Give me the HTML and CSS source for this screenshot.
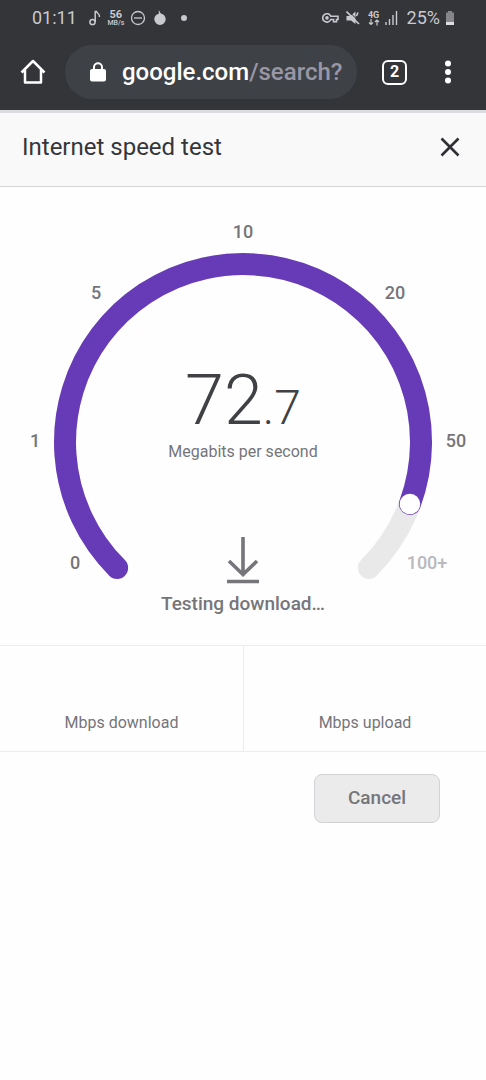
FILE: index.html
```html
<!DOCTYPE html>
<html lang="en">
<head>
<meta charset="utf-8">
<meta name="viewport" content="width=device-width, initial-scale=1">
<title>Internet speed test</title>
<link rel="stylesheet" href="styles.css">
</head>
<body>
<div class="chrome">
  <div class="status">
    <div class="status-left">
      <span class="clock">01:11</span>
      <svg class="note" width="12" height="16" viewBox="0 0 12 16"><circle cx="3.500" cy="12" r="2.600"/><path d="M6.200 12V1.500h1.300c.3 2.200 3.300 1.500 3 5.500"/></svg>
      <span class="rate"><b>56</b><small>MB/s</small></span>
      <svg class="dnd" width="16" height="16" viewBox="0 0 16 16"><circle cx="8" cy="8" r="6.500"/><path d="M4 8h8"/></svg>
      <svg class="drop" width="12" height="16" viewBox="0 0 12 16"><path d="M4.800 0l2 3.500c3 .7 4.900 2.800 4.900 5.800a5.700 5.700 0 0 1-11.400 0c0-2.800 1.700-4.800 4.500-5.500z"/></svg>
      <span class="dot"></span>
    </div>
    <div class="status-right">
      <svg class="key" width="17" height="12" viewBox="0 0 17 12"><path d="M8.800 4.300H16v3.200h-1.500V9.800h-3V7.500H8.800A4.200 4.200 0 1 1 8.800 4.300z"/><circle cx="5" cy="5.900" r="1"/></svg>
      <svg class="mute" width="14" height="14" viewBox="0 0 14 14"><path class="solid" d="M.5 5h4l5-4.500V13L5 9.500H.5z"/><path class="cut" d="M2.500 0l12 12"/><path class="slash" d="M.5 .5l12.500 12.500"/><path class="slash" d="M10.500 5l1.500-3.500"/></svg>
      <span class="net"><b>4G</b><svg width="12" height="7" viewBox="0 0 12 7"><path d="M3 0v5M1 3.500l2 2 2-2M9 6.500V1M7 3l2-2 2 2"/></svg></span>
      <svg class="signal" width="13" height="14" viewBox="0 0 13 14"><path d="M1 11v3M4.500 8v6M8 4v10M11.500 0v14"/></svg>
      <span class="percent">25%</span>
      <svg class="battery" width="10" height="14" viewBox="0 0 10 14"><path class="cell" d="M3 0h4v1.500h2V14H1V1.500h2z"/><path class="charge" d="M1 11h8v3H1z"/></svg>
    </div>
  </div>
  <div class="toolbar">
    <button class="icon-button home" aria-label="Home"><svg width="26" height="26" viewBox="0 0 26 26"><path d="M1.500 13.500L13 2l11.500 11.500M5 11v12.500h16V11"/></svg></button>
    <button class="address">
      <svg width="16" height="20" viewBox="0 0 16 20"><path d="M4 8V5.200a4 4 0 0 1 8 0V8" fill="none" stroke="#fff" stroke-width="2"/><rect x="0" y="7" width="16" height="12.500" rx="2" fill="#fff"/></svg>
      <span class="url">google.com<span class="path">/search?</span></span>
    </button>
    <button class="tabs" aria-label="Open tabs">2</button>
    <button class="icon-button more" aria-label="More"><svg width="8" height="24" viewBox="0 0 8 24"><circle cx="4" cy="3.500" r="3"/><circle cx="4" cy="12" r="3"/><circle cx="4" cy="20.500" r="3"/></svg></button>
  </div>
</div>
<header class="heading">
  <h1>Internet speed test</h1>
  <button class="icon-button close" aria-label="Close"><svg width="20" height="20" viewBox="0 0 20 20"><path d="M1.500 1.500l17 17M18.500 1.500l-17 17"/></svg></button>
</header>
<main>
  <section class="gauge">
    <svg class="dial" viewBox="0 0 486 458" role="img" aria-label="Speed gauge">
      <path class="track" d="M117.100 380.900A178 178 0 1 1 368.900 380.900"/>
      <path class="value" d="M117.100 380.900A178 178 0 1 1 409.900 317"/>
      <circle class="knob" cx="409.900" cy="317" r="10.300"/>
      <g class="ticks">
        <text x="75" y="382">0</text>
        <text x="35" y="260">1</text>
        <text x="96" y="112">5</text>
        <text x="243" y="51">10</text>
        <text x="395" y="112">20</text>
        <text x="456" y="260">50</text>
        <text class="faded" x="427" y="382">100+</text>
      </g>
    </svg>
    <div class="readout">
      <div class="speed">72<span class="fraction">.7</span></div>
      <div class="unit">Megabits per second</div>
      <svg class="arrow" width="34" height="48" viewBox="0 0 34 48"><path d="M17 1v37M3 25l14 13.500L31 25M1 45.500h32"/></svg>
      <div class="phase">Testing download…</div>
    </div>
  </section>
  <section class="results">
    <div class="result">Mbps download</div>
    <div class="result">Mbps upload</div>
  </section>
  <div class="actions"><button class="cancel">Cancel</button></div>
</main>
</body>
</html>
```
FILE: styles.css
```css
* { box-sizing: border-box; }
body { margin: 0; background: #fefefe; color: #75757a; font-family: Roboto, "Liberation Sans", sans-serif; }
button { margin: 0; padding: 0; border: 0; background: none; color: inherit; font: inherit; }
svg { display: block; flex: none; fill: none; }

.chrome { height: 110px; background: #333539; color: #fff; }
.status { display: flex; justify-content: space-between; height: 36px; padding: 0 31px 0 32px; color: #c9c9d0; }
.status-left, .status-right { display: flex; align-items: center; }
.status svg { stroke: currentColor; }
.clock, .percent { font-size: 18px; line-height: 36px; font-weight: 400; }
.note { margin-left: 12px; stroke-width: 1.5; }
.rate { display: flex; flex-direction: column; align-items: center; width: 18px; margin: 0 5px 0 6px; line-height: 10px; }
.rate b { font-size: 11px; }
.rate small { font-size: 7px; line-height: 7px; font-weight: 500; }
.dnd { stroke-width: 1.3; }
.status .drop { margin-left: 8px; fill: currentColor; stroke: none; }
.dot { width: 6px; height: 6px; margin-left: 15px; border-radius: 50%; background: currentColor; }
.key { stroke-width: 1.6; }
.mute { margin-left: 7px; }
.mute .solid { fill: currentColor; stroke: none; }
.mute .cut { stroke: #333539; stroke-width: 1; }
.mute .slash { stroke-width: 1.6; }
.net { display: flex; flex-direction: column; align-items: center; width: 12px; margin-left: 8px; }
.net b { font-size: 9px; line-height: 8px; }
.net svg { stroke-width: 1.2; }
.signal { margin: 0 9px 0 5px; stroke-width: 1.4; }
.battery { margin-left: 5px; }
.battery .cell { fill: #85858a; stroke: none; }
.battery .charge { fill: #dedee2; stroke: none; }

.toolbar { display: flex; align-items: center; height: 72px; padding: 0 34px 0 20px; }
.icon-button { display: grid; place-items: center; flex: none; }
.home svg { stroke: #fff; stroke-width: 2.5; stroke-linejoin: round; }
.address { display: flex; flex: 1; align-items: center; gap: 16px; min-width: 0; height: 54px; margin: 0 25px 0 19px; padding: 0 8px 0 25px; border-radius: 27px; background: #3e4246; }
.url { overflow: hidden; white-space: nowrap; font-size: 24px; line-height: 32px; font-weight: 500; }
.path { color: #9997a6; }
.tabs { flex: none; width: 25px; height: 25px; border: 2px solid #fff; border-radius: 6px; font-size: 16px; line-height: 20px; font-weight: 700; }
.more { margin-left: 37px; }
.more svg { fill: #fff; }

.heading { display: flex; align-items: center; justify-content: space-between; height: 77px; padding: 0 26px 6px 22px; border-top: 3px solid #dcdce0; border-bottom: 1px solid #d5d5d7; background: #f9f9f9; }
.heading h1 { margin: 0; color: #35353a; font-size: 24px; line-height: 32px; font-weight: 400; }
.close svg { stroke: #303034; stroke-width: 2.600; }

.gauge { display: grid; }
.dial, .readout { grid-area: 1 / 1; }
.dial { width: 100%; }
.track { stroke: #e9e9e9; stroke-width: 22; stroke-linecap: round; }
.value { stroke: #673ab7; stroke-width: 22; stroke-linecap: round; }
.knob { fill: #fff; }
.ticks { fill: #75757a; font-size: 18px; font-weight: 500; text-anchor: middle; }
.faded { fill: #b8b8bd; }
.readout { display: flex; flex-direction: column; align-items: center; align-self: center; padding-top: 152px; padding-bottom: 9px; }
.speed { color: #3f4144; font-size: 70px; line-height: 80px; font-weight: 300; }
.fraction { font-size: 48px; }
.unit { margin-top: -8px; font-size: 16px; line-height: 24px; }
.arrow { margin-top: 72px; stroke: #75757a; stroke-width: 3.600; }
.phase { margin-top: 8px; font-size: 19px; line-height: 24px; font-weight: 500; }

.results { display: grid; grid-template-columns: 1fr 1fr; height: 107px; border-top: 1px solid #ededed; border-bottom: 1px solid #ededed; }
.result { display: flex; align-items: flex-end; justify-content: center; padding-bottom: 16px; font-size: 16px; line-height: 24px; }
.result + .result { border-left: 1px solid #ededed; }
.actions { display: flex; justify-content: flex-end; padding: 22px 46px; }
.cancel { width: 126px; height: 49px; padding-bottom: 2px; border: 1px solid #d2d2d4; border-radius: 8px; background: #ebebec; font-size: 19px; font-weight: 500; }
```
